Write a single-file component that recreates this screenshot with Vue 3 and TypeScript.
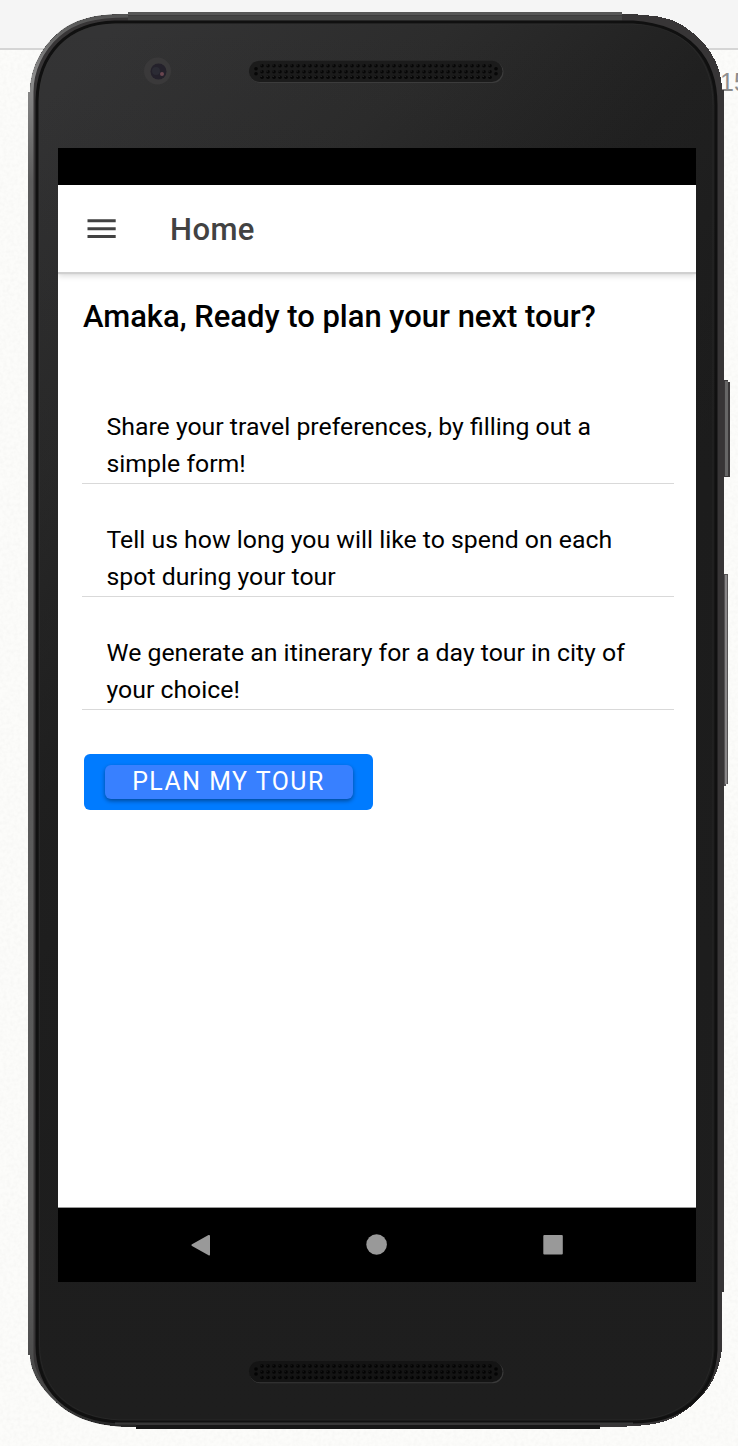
<script setup lang="ts">
const steps: string[][] = [
  ['Share your travel preferences, by filling out a', 'simple form!'],
  ['Tell us how long you will like to spend on each', 'spot during your tour'],
  ['We generate an itinerary for a day tour in city of', 'your choice!'],
]
const grilles = [
  { y: 60.7, hole: '#070707', fill: '#1b1b1b', edge: '#3c3c3c', glint: '#343434' },
  { y: 1361, hole: '#040404', fill: '#141414', edge: '#3a3a3a', glint: '#1d1d1d' },
]
const columns = Array.from({ length: 39 }, (_, i) => 262 + i * 6)
</script>

<template>
  <main class="desktop">
    <div class="toolbar"></div>
    <span class="clock">15</span>
    <svg class="device" width="738" height="1446" viewBox="0 0 738 1446" aria-hidden="true">
      <defs>
        <filter id="paper" x="0" y="0" width="100%" height="100%">
          <feTurbulence type="fractalNoise" baseFrequency="0.28" numOctaves="2" seed="4" />
          <feColorMatrix values="0 0 0 0 0.6  0 0 0 0 0.6  0 0 0 0 0.59  0.2 0 0 0 -0.07" />
        </filter>
        <clipPath id="silhouette">
          <path d="M128 12H622V14C650 14 670 17 682 25C708 41 722 65 722 90H724V1292H722V1349C719 1378 704 1400 677 1416C661 1425 640 1427 600 1427V1429H136V1427C98 1427 75 1419 57 1403C39 1387 30 1370 30 1355H28V92H30C30 70 40 49 57 34C74 19 94 14 128 14Z" />
        </clipPath>
        <linearGradient id="face" gradientUnits="userSpaceOnUse" x1="120" y1="20" x2="650" y2="500">
          <stop offset="0" stop-color="#343435" />
          <stop offset=".35" stop-color="#2c2c2c" />
          <stop offset=".65" stop-color="#202020" />
          <stop offset="1" stop-color="#1b1b1b" />
        </linearGradient>
        <linearGradient id="left" gradientUnits="userSpaceOnUse" x1="0" x2="0" y1="12" y2="1429">
          <stop offset="0" stop-color="#505050" />
          <stop offset=".045" stop-color="#8c8c8c" />
          <stop offset=".12" stop-color="#5c5c5c" />
          <stop offset=".9" stop-color="#5a5a5a" />
          <stop offset=".98" stop-color="#454545" />
          <stop offset="1" stop-color="#202020" />
        </linearGradient>
        <linearGradient id="lower" x1="0" x2="0" y1="0" y2="1">
          <stop offset="0" stop-color="#1e1e1e" stop-opacity="0" />
          <stop offset="1" stop-color="#1e1e1e" />
        </linearGradient>
      </defs>
      <rect x="0" y="50" width="738" height="1396" filter="url(#paper)" />
      <path d="M723 380h5v2h2v95h-7z" fill="#3a3839" />
      <path d="M725 381h3v95h-3z" fill="#666" />
      <path d="M723 574h5v210h-2v2h-3z" fill="#555354" />
      <path d="M725 575h2v209h-2z" fill="#898788" />
      <path
        shape-rendering="crispEdges"
        d="M128 12H622V14C650 14 670 17 682 25C708 41 722 65 722 90H724V1292H722V1349C719 1378 704 1400 677 1416C661 1425 640 1427 600 1427V1429H136V1427C98 1427 75 1419 57 1403C39 1387 30 1370 30 1355H28V92H30C30 70 40 49 57 34C74 19 94 14 128 14Z"
        fill="#373536"
      />
      <g clip-path="url(#silhouette)">
        <path
          d="M128 14C94 14 74 19 57 34C40 49 30 70 30 92V1355C30 1370 39 1387 57 1403C75 1419 98 1427 136 1427"
          fill="none"
          stroke="url(#left)"
          stroke-width="7"
        />
        <path d="M128 13.500H622" stroke="#575757" stroke-width="3" />
        <path d="M128 18H622" stroke="#444" stroke-width="5" />
        <path d="M136 1427H600" stroke="#161616" stroke-width="4" />
      </g>
      <path
        d="M115 22H633C690 26 716 59 716 105V1350C714 1395 682 1422 632 1422H120C68 1420 37 1390 37 1345V101C38 53 68 23 115 22Z"
        fill="url(#face)"
        stroke="#101010"
        stroke-width="3"
      />
      <path
        d="M115 24H633C686 26 713 59 713 105V1350C711 1392 680 1420 632 1420H120C70 1418 39.500 1388 39.500 1345V101C40 54 69 25 115 24Z"
        fill="url(#lower)"
        stroke="#343434"
        stroke-opacity=".4"
      />
      <path d="M115 1423.500H633" stroke="#383838" stroke-width="2" />
      <circle cx="157.500" cy="71" r="13.500" fill="#3a393a" />
      <circle cx="158.500" cy="71.500" r="8" fill="#24212b" />
      <circle cx="156" cy="71" r="4" fill="#2b2b34" />
      <circle cx="162" cy="74" r="2" fill="#6a4650" />
      <g v-for="g in grilles" :key="g.y">
        <rect x="249.500" :y="g.y + 0.500" width="254" height="21.700" rx="10.850" :fill="g.edge" />
        <rect x="249" :y="g.y" width="253.500" height="21.200" rx="10.600" :fill="g.fill" />
        <g :fill="g.hole">
          <template v-for="x in columns" :key="x">
            <circle v-for="dy in [5, 11, 16.500]" :key="dy" :cx="x" :cy="g.y + dy" r="1.800" />
            <circle v-for="dy in [4.300, 10.300, 15.800]" :key="dy + 50" :cx="x - 0.800" :cy="g.y + dy" r=".6" :fill="g.glint" />
          </template>
          <circle v-for="x in [256, 496]" :key="x" :cx="x" :cy="g.y + 8" r="1.800" />
          <circle v-for="x in [256, 496]" :key="x + 1" :cx="x" :cy="g.y + 13" r="1.800" />
        </g>
      </g>
    </svg>

    <section class="screen">
      <div class="status"></div>
      <header class="appbar">
        <svg class="menu" width="30" height="20" viewBox="0 0 30 20">
          <path d="M1.500 1.700H29.700M1.500 9.700H29.700M1.500 17.500H29.700" stroke="#424242" stroke-width="3" />
        </svg>
        <span class="title">Home</span>
      </header>
      <div class="content">
        <h1>Amaka, Ready to plan your next tour?</h1>
        <ul>
          <li v-for="step in steps" :key="step[0]">
            <span v-for="line in step" :key="line">{{ line }}</span>
          </li>
        </ul>
        <div class="cta"><button type="button">PLAN MY TOUR</button></div>
      </div>
      <nav>
        <svg width="638" height="74" viewBox="0 0 638 74" fill="#999">
          <path d="M134 36.300L150.500 27Q152 26.500 152 28V46.500Q152 48 150.500 47.200L134 38Q132.500 37.100 134 36.300Z" />
          <circle cx="318.600" cy="36.500" r="10.300" />
          <rect x="485.300" y="27" width="19.500" height="19.500" rx="1" />
        </svg>
      </nav>
    </section>
  </main>
</template>

<style>
body { margin: 0; background: #fafaf8; }
</style>

<style scoped>
* { box-sizing: border-box; }
.desktop {
  position: relative;
  width: 738px;
  height: 1446px;
  overflow: hidden;
  padding: 148px 0 0 58px;
  background: #fcfcfa;
  font-family: Roboto, sans-serif;
}
.toolbar {
  position: absolute;
  inset: 0 0 auto;
  height: 50px;
  background: #f5f5f5;
  border-bottom: 2px solid #d5d5d5;
}
.clock {
  position: absolute;
  left: 720px;
  top: 67px;
  font: 25px/30px "Liberation Sans", sans-serif;
  color: #8b8b8b;
}
.device { position: absolute; inset: 0; }
.screen {
  position: relative;
  display: flex;
  flex-direction: column;
  width: 638px;
  height: 1134px;
  overflow: hidden;
  background: #fff;
}
.status { position: relative; z-index: 1; height: 37px; background: #000; }
.appbar {
  display: flex;
  align-items: center;
  gap: 54px;
  height: 87px;
  padding-left: 28px;
  box-shadow: 0 2px 1px #d0d0d0, 0 4px 6px rgba(0, 0, 0, .14);
}
.menu { display: block; }
.title {
  padding-top: 2px;
  font-size: 31px;
  font-weight: 500;
  letter-spacing: .4px;
  color: #424242;
}
.content { flex: 1; padding: 26px 22px 0 24px; }
h1 {
  margin: 0;
  padding-left: 1px;
  font-size: 30.950px;
  line-height: 37px;
  font-weight: 500;
  white-space: nowrap;
  color: #000;
}
ul { list-style: none; margin: 36px 0 0; padding: 0; }
li {
  display: flex;
  flex-direction: column;
  justify-content: flex-end;
  height: 113px;
  padding: 0 0 1px 24.500px;
  border-bottom: 1px solid #d9d9d9;
}
li span { height: 37px; font-size: 24.820px; line-height: 37px; white-space: nowrap; }
li span:first-child { height: 37.500px; }
.cta {
  display: flex;
  align-items: center;
  justify-content: center;
  width: 289px;
  height: 56px;
  margin: 44px 0 0 2px;
  border-radius: 6px;
  background: #007bff;
}
button {
  width: 248px;
  height: 34px;
  padding: 0;
  border: 0;
  border-radius: 6px;
  background: #3880ff;
  box-shadow: 0 2px 4px rgba(0, 0, 0, .4);
  color: #fff;
  font: 24.900px/34px Roboto, sans-serif;
  letter-spacing: 1.500px;
  white-space: nowrap;
}
nav { height: 75px; border-top: 1px solid #999; background: #000; }
nav svg { display: block; }
</style>
